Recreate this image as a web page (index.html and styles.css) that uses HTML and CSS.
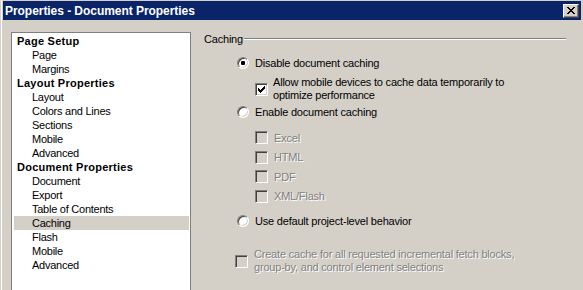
FILE: index.html
```html
<!DOCTYPE html>
<html>
<head>
<meta charset="utf-8">
<title>Properties - Document Properties</title>
<link rel="stylesheet" href="styles.css">
</head>
<body>
<div class="window">
  <div class="titlebar">
    <span class="title">Properties - Document Properties</span>
    <span class="close">
      <svg width="8" height="7" viewBox="0 0 8 7" shape-rendering="crispEdges" fill="#000">
        <rect x="0" y="0" width="2" height="1"/><rect x="6" y="0" width="2" height="1"/>
        <rect x="1" y="1" width="2" height="1"/><rect x="5" y="1" width="2" height="1"/>
        <rect x="2" y="2" width="4" height="1"/>
        <rect x="3" y="3" width="2" height="1"/>
        <rect x="2" y="4" width="4" height="1"/>
        <rect x="1" y="5" width="2" height="1"/><rect x="5" y="5" width="2" height="1"/>
        <rect x="0" y="6" width="2" height="1"/><rect x="6" y="6" width="2" height="1"/>
      </svg>
    </span>
  </div>
  <div class="content">
    <div class="tree">
      <div class="node head">Page Setup</div>
      <div class="node child">Page</div>
      <div class="node child">Margins</div>
      <div class="node head">Layout Properties</div>
      <div class="node child">Layout</div>
      <div class="node child">Colors and Lines</div>
      <div class="node child">Sections</div>
      <div class="node child">Mobile</div>
      <div class="node child">Advanced</div>
      <div class="node head">Document Properties</div>
      <div class="node child">Document</div>
      <div class="node child">Export</div>
      <div class="node child">Table of Contents</div>
      <div class="node child sel">Caching</div>
      <div class="node child">Flash</div>
      <div class="node child">Mobile</div>
      <div class="node child">Advanced</div>
    </div>
    <div class="pane">
      <div class="group-head"><span class="legend">Caching</span><span class="rule"></span></div>
      <div class="options">
        <div class="opt opt-first"><span class="radio checked"></span><span class="label">Disable document caching</span></div>
        <div class="opt opt-sub">
          <span class="check">
            <svg width="7" height="7" viewBox="0 0 7 7" shape-rendering="crispEdges" fill="#000">
              <rect x="6" y="0" width="1" height="1"/>
              <rect x="5" y="1" width="2" height="1"/>
              <rect x="0" y="2" width="1" height="1"/><rect x="4" y="2" width="3" height="1"/>
              <rect x="0" y="3" width="2" height="1"/><rect x="3" y="3" width="3" height="1"/>
              <rect x="0" y="4" width="5" height="1"/>
              <rect x="1" y="5" width="3" height="1"/>
              <rect x="2" y="6" width="1" height="1"/>
            </svg>
          </span>
          <span class="label multi">Allow mobile devices to cache data temporarily to<br>optimize performance</span>
        </div>
        <div class="opt opt-enable"><span class="radio"></span><span class="label">Enable document caching</span></div>
        <div class="formats">
          <div class="fmt"><span class="check disabled"></span><span class="label dis">Excel</span></div>
          <div class="fmt"><span class="check disabled"></span><span class="label dis">HTML</span></div>
          <div class="fmt"><span class="check disabled"></span><span class="label dis">PDF</span></div>
          <div class="fmt"><span class="check disabled"></span><span class="label dis">XML/Flash</span></div>
        </div>
        <div class="opt opt-default"><span class="radio"></span><span class="label">Use default project-level behavior</span></div>
        <div class="opt opt-last"><span class="check disabled"></span><span class="label multi dis">Create cache for all requested incremental fetch blocks,<br>group-by, and control element selections</span></div>
      </div>
    </div>
  </div>
</div>
</body>
</html>
```

FILE: styles.css
```css
html, body {
  margin: 0;
  padding: 0;
  height: 100%;
}
body {
  background: #d4d0c8;
  font-family: "Liberation Sans", Arial, sans-serif;
  font-size: 11px;
  color: #000;
  overflow: hidden;
}
.window {
  height: 290px;
  margin-left: 1px;
  border-left: 1px solid #fff;
  padding: 1px 2px 0 1px;
  box-sizing: border-box;
  display: flex;
  flex-direction: column;
  overflow: hidden;
}
.titlebar {
  height: 19px;
  flex: none;
  background: #0a246a;
  color: #fff;
  display: flex;
  align-items: center;
  justify-content: space-between;
  padding: 0 2px 0 2px;
}
.title {
  font-weight: bold;
  font-size: 12px;
  letter-spacing: -0.05px;
}
.close {
  width: 16px;
  height: 14px;
  box-sizing: border-box;
  background: #d4d0c8;
  border: 1px solid;
  border-color: #fff #404040 #404040 #fff;
  box-shadow: inset -1px -1px 0 #808080;
  display: flex;
  align-items: center;
  justify-content: center;
  padding: 0 1px 1px 0;
}
.close svg { display: block; }
.content {
  flex: 1;
  display: flex;
  padding-top: 12px;
  min-height: 0;
}
.tree {
  width: 180px;
  height: 300px;
  flex: none;
  margin-left: 8px;
  box-sizing: border-box;
  border: 1px solid #808080;
  background: #fff;
  padding: 1px 1px 0 2px;
}
.node {
  height: 14px;
  line-height: 14px;
  white-space: nowrap;
  letter-spacing: -0.25px;
}
.head {
  font-weight: bold;
  padding-left: 3px;
  letter-spacing: 0.25px;
}
.child {
  padding-left: 18px;
}
.sel {
  background: #d4d0c8;
}
.pane {
  flex: 1;
  padding: 0 15px 0 13px;
}
.group-head {
  display: flex;
  align-items: center;
  height: 14px;
}
.legend {
  letter-spacing: -0.2px;
}
.rule {
  flex: 1;
  height: 0;
  border-top: 1px solid #808080;
  border-bottom: 1px solid #fff;
  margin-left: 1px;
}
.options {
  padding-left: 33px;
  display: flex;
  flex-direction: column;
}
.opt {
  display: flex;
  align-items: center;
  min-height: 14px;
}
.label {
  letter-spacing: -0.2px;
  line-height: 14px;
  white-space: nowrap;
}
.multi {
  line-height: 13px;
}
.radio + .label { margin-left: 6px; }
.check + .label { margin-left: 5px; }
.dis {
  color: #808080;
  text-shadow: 1px 1px 0 #fff;
}
.opt-first { margin-top: 10px; }
.opt-sub { margin-top: 6px; margin-left: 18px; }
.opt-enable { margin-top: 3px; }
.formats {
  margin-top: 9px;
  margin-left: 18px;
  display: flex;
  flex-direction: column;
}
.fmt {
  height: 19.5px;
  display: flex;
  align-items: center;
}
.fmt .label { margin-left: 6px; }
.opt-default { margin-top: 8px; }
.opt-last { margin-top: 20px; margin-left: -2px; }
.opt-last .label { margin-left: 6px; }

.radio {
  width: 12px;
  height: 12px;
  flex: none;
  box-sizing: border-box;
  border-radius: 50%;
  background: #fff;
  border: 1px solid;
  border-color: #808080 #fff #fff #808080;
  box-shadow: inset 1px 1px 0 #404040, inset -1px -1px 0 #d4d0c8;
  display: flex;
  align-items: center;
  justify-content: center;
}
.radio.checked::after {
  content: "";
  width: 4px;
  height: 4px;
  border-radius: 1px;
  background: #000;
}
.check {
  width: 13px;
  height: 13px;
  flex: none;
  box-sizing: border-box;
  background: #fff;
  border: 1px solid;
  border-color: #808080 #fff #fff #808080;
  box-shadow: inset 1px 1px 0 #404040, inset -1px -1px 0 #d4d0c8;
  display: flex;
  align-items: center;
  justify-content: center;
}
.check svg { display: block; }
.check.disabled {
  background: #d4d0c8;
}
```
